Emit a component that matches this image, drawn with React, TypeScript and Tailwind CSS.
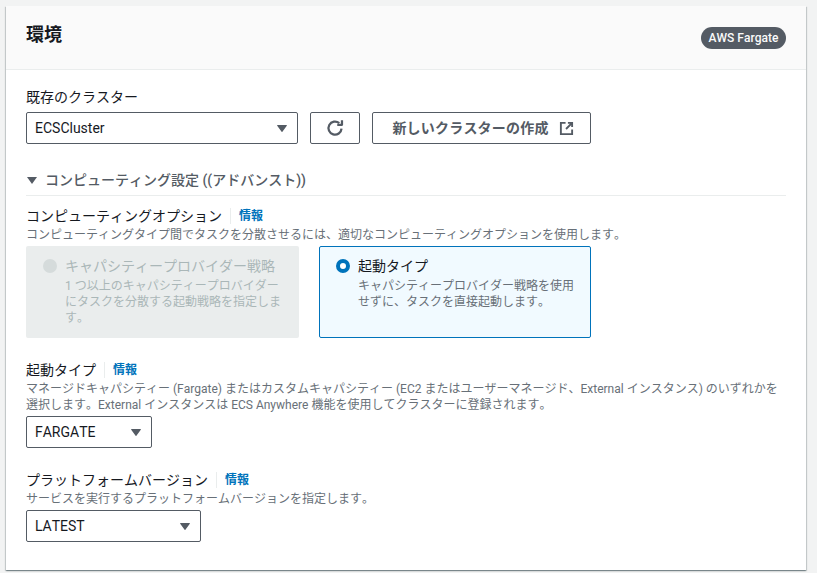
import React from 'react';

const fontStack = 'font-["Roboto","Noto_Sans_CJK_JP",sans-serif] [font-kerning:none]';

function Caret() {
  return (
    <svg width="10" height="7" viewBox="0 0 10 7" className="shrink-0">
      <path d="M0.6 0h8.8a.5.5 0 0 1 .4.8L5.4 6.8a.5.5 0 0 1-.8 0L.2.8A.5.5 0 0 1 .6 0z" fill="#545b64" />
    </svg>
  );
}

function Select({ value, width }: { value: string; width: string }) {
  return (
    <div className={`flex h-8 items-center justify-between rounded-[2px] border border-[#545b64] bg-white pl-2 pr-[10px] text-sm text-[#16191f] ${width}`}>
      <span>{value}</span>
      <Caret />
    </div>
  );
}

function FieldLabel({ text }: { text: string }) {
  return (
    <div className="flex h-[22px] items-center text-sm leading-[22px] text-[#16191f]">
      <span>{text}</span>
      <span className="mx-2 h-[16px] w-px bg-[#eaeded]" />
      <span className="text-xs font-bold text-[#0073bb]">情報</span>
    </div>
  );
}

export default function App() {
  return (
    <div className={`h-[573px] w-[817px] overflow-hidden bg-[#f2f3f3] pl-[6px] pt-[6px] ${fontStack}`}>
      <div className="h-[564px] w-[800px] bg-white shadow-[0_1px_1px_0_rgba(0,28,36,0.3),1px_1px_1px_0_rgba(0,28,36,0.15),-1px_1px_1px_0_rgba(0,28,36,0.15)]">
        {/* Header */}
        <div className="flex h-[64px] items-center justify-between border-b border-[#eaeded] bg-[#fafafa] px-5">
          <h2 className="mb-[6px] text-lg font-bold text-[#16191f]">環境</h2>
          <span className="flex h-[22px] w-[85px] items-center justify-center rounded-full bg-[#545b64] text-xs font-medium text-[#fafafa]">
            AWS Fargate
          </span>
        </div>

        <div className="px-5 pt-4">
          {/* Cluster */}
          <div className="flex h-[22px] items-center text-sm text-[#16191f]">既存のクラスター</div>
          <div className="mt-[4px] flex gap-3">
            <Select value="ECSCluster" width="w-[272px]" />
            <div className="flex h-8 w-[50px] items-center justify-center rounded-[2px] border border-[#545b64]">
              <svg width="18" height="18" viewBox="0 0 16 16" fill="none" stroke="#545b64" strokeWidth="2">
                <path d="M13.8 8.5a5.8 5.8 0 1 1-2-4.8" />
                <path d="M14.2 1v4.2H10" strokeLinejoin="round" />
              </svg>
            </div>
            <div className="flex h-8 w-[219px] items-center justify-center gap-[10px] rounded-[2px] border border-[#545b64] pl-[3px] text-sm font-bold tracking-[0.2px] text-[#545b64]">
              <span>新しいクラスターの作成</span>
              <svg width="15" height="15" viewBox="0 0 16 16" fill="none" stroke="#545b64" strokeWidth="2">
                <path d="M7 2H2v12h12V9" />
                <path d="M9.5 2H14v4.5M14 2L7.5 8.5" />
              </svg>
            </div>
          </div>

          {/* Advanced */}
          <div className="mt-[24px] flex h-[24px] items-center gap-[8px] text-sm font-medium text-[#545b64]">
            <svg width="10" height="7" viewBox="0 0 10 7" className="ml-[1px]">
              <path d="M0 0h10L5 7z" fill="#545b64" />
            </svg>
            <span>コンピューティング設定 ((アドバンスト))</span>
          </div>
          <div className="mt-[3px] h-px bg-[#eaeded]" />

          <div className="mt-[9px]">
            <FieldLabel text="コンピューティングオプション" />
            <p className="h-4 text-xs leading-4 text-[#687078]">
              コンピューティングタイプ間でタスクを分散させるには、適切なコンピューティングオプションを使用します。
            </p>
            <div className="mt-[3px] flex gap-5">
              <div className="flex h-[92px] w-[273px] gap-2 rounded-[2px] bg-[#eaeded] pl-[17px] pr-3 pt-[9px]">
                <span className="mt-[4px] size-[14px] shrink-0 rounded-full bg-[#d5dbdb]" />
                <div>
                  <div className="text-sm leading-[22px] text-[#aab7b8]">キャパシティープロバイダー戦略</div>
                  <div className="mt-[1px] text-xs leading-4 text-[#aab7b8]">
                    1 つ以上のキャパシティープロバイダーにタスクを分散する起動戦略を指定します。
                  </div>
                </div>
              </div>
              <div className="flex h-[92px] w-[272px] gap-2 rounded-[2px] border border-[#0073bb] bg-[#f1faff] pl-[16px] pr-3 pt-[8px]">
                <span className="mt-[4px] size-[14px] shrink-0 rounded-full border-[4px] border-[#0073bb] bg-white" />
                <div>
                  <div className="text-sm leading-[22px] text-[#16191f]">起動タイプ</div>
                  <div className="mt-[1px] text-xs leading-4 text-[#687078]">
                    キャパシティープロバイダー戦略を使用せずに、タスクを直接起動します。
                  </div>
                </div>
              </div>
            </div>
          </div>

          <div className="mt-[21px]">
            <FieldLabel text="起動タイプ" />
            <p className="text-xs leading-4 text-[#687078]">
              マネージドキャパシティー (Fargate) またはカスタムキャパシティー (EC2 またはユーザーマネージド、External インスタンス) のいずれかを選択します。External インスタンスは ECS Anywhere 機能を使用してクラスターに登録されます。
            </p>
            <div className="mt-[3px]">
              <Select value="FARGATE" width="w-[126px]" />
            </div>
          </div>

          <div className="mt-[21px]">
            <FieldLabel text="プラットフォームバージョン" />
            <p className="text-xs leading-4 text-[#687078]">
              サービスを実行するプラットフォームバージョンを指定します。
            </p>
            <div className="mt-[3px]">
              <Select value="LATEST" width="w-[175px]" />
            </div>
          </div>
        </div>
      </div>
    </div>
  );
}
